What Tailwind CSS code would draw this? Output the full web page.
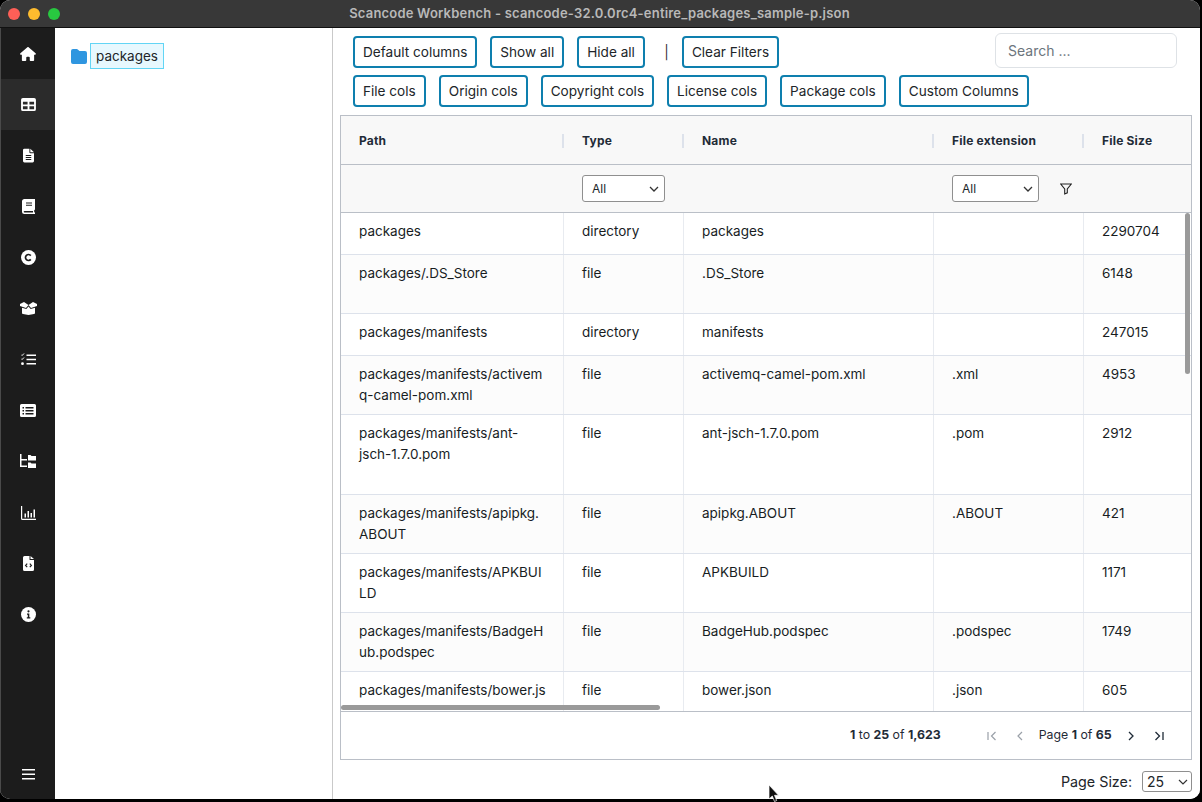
<!DOCTYPE html>
<html lang="en">
<head>
<meta charset="UTF-8">
<title>Scancode Workbench</title>
<script src="https://cdn.jsdelivr.net/npm/@tailwindcss/browser@4"></script>
</head>
<body class="bg-black">
<div class="relative w-[1202px] h-[802px] overflow-hidden bg-black [font-family:Inter,sans-serif] text-[#212529]">
  <div class="w-[1200px] h-[799px] rounded-[10px] overflow-hidden flex flex-col bg-white">

    <!-- title bar -->
    <div class="relative h-[28px] shrink-0 bg-[#383838] border-b border-[#111] flex items-center justify-center">
      <div class="absolute left-[8px] top-[8px] flex gap-[8px]">
        <span class="w-[12px] h-[12px] rounded-full bg-[#fe5f57]"></span>
        <span class="w-[12px] h-[12px] rounded-full bg-[#febc2e]"></span>
        <span class="w-[12px] h-[12px] rounded-full bg-[#28c840]"></span>
      </div>
      <span class="text-[13px] font-semibold text-[#b9b9b9] tracking-[0.2px] ml-[-1px]">Scancode Workbench - scancode-32.0.0rc4-entire_packages_sample-p.json</span>
    </div>

    <div class="flex flex-1 min-h-0">
      <!-- sidebar -->
      <div class="w-[55px] shrink-0 bg-[#1c1c1c] border-l border-[#4a4a4a] flex flex-col text-white">
        <div class="h-[51px] flex items-center justify-center">
          <svg class="w-[16px] h-[14px]" viewBox="0 0 576 512" fill="currentColor"><path d="M575.8 255.5c0 18-15 32.1-32 32.1h-32l.7 160.2c0 2.7-.2 5.4-.5 8.1V472c0 22.1-17.9 40-40 40H456c-1.1 0-2.2 0-3.3-.1c-1.4 .1-2.8 .1-4.2 .1H416 392c-22.1 0-40-17.9-40-40V448 384c0-17.7-14.3-32-32-32H256c-17.7 0-32 14.3-32 32v64 24c0 22.1-17.9 40-40 40H160 128.1c-1.5 0-3-.1-4.5-.2c-1.2 .1-2.4 .2-3.6 .2H104c-22.1 0-40-17.9-40-40V360c0-.9 0-1.9 .1-2.8V287.6H32c-18 0-32-14-32-32.1c0-9 3-17 10-24L266.4 8c7-7 15-8 22-8s15 2 21 7L564.8 231.5c8 7 12 15 11 24z"/></svg>
        </div>
        <div class="h-[51px] flex items-center justify-center bg-[#2b2b2b]">
          <svg class="w-[15px] h-[13px]" viewBox="0 0 16 14" fill="currentColor"><path fill-rule="evenodd" d="M2 0h12a2 2 0 0 1 2 2v10a2 2 0 0 1-2 2H2a2 2 0 0 1-2-2V2a2 2 0 0 1 2-2zM2 4v3h5V4zm7 0v3h5V4zM2 9v3h5V9zm7 0v3h5V9z"/></svg>
        </div>
        <div class="h-[51px] flex items-center justify-center">
          <svg class="w-[11px] h-[15px]" viewBox="0 0 12 15" fill="currentColor"><path fill-rule="evenodd" d="M1.500 0H7v4a1 1 0 0 0 1 1h4v8.500a1.500 1.500 0 0 1-1.500 1.500h-9A1.500 1.500 0 0 1 0 13.500v-12A1.500 1.500 0 0 1 1.500 0zM8 0l4 4H8zM3 7v1h6V7zm0 2.200v1h6v-1zm0 2.200v1h6v-1z"/></svg>
        </div>
        <div class="h-[51px] flex items-center justify-center">
          <svg class="w-[13px] h-[15px]" viewBox="0 0 13 15" fill="currentColor"><path fill-rule="evenodd" d="M2.500 0H13v10.500l-.8.700v1.800l.8.700V15H2.500A2.500 2.500 0 0 1 0 12.500v-10A2.500 2.500 0 0 1 2.500 0zM4 3.500v1h6v-1zm0 2.200v1h6v-1zM2.500 12a.8.800 0 0 0 0 1.600H11V12z"/></svg>
        </div>
        <div class="h-[51px] flex items-center justify-center">
          <svg class="w-[15px] h-[15px]" viewBox="0 0 15 15"><circle cx="7.500" cy="7.500" r="7.500" fill="currentColor"/><path d="M9.800 5.600a3 3 0 1 0 0 3.800" fill="none" stroke="#1c1c1c" stroke-width="1.700"/></svg>
        </div>
        <div class="h-[51px] flex items-center justify-center">
          <svg class="w-[17px] h-[13px]" viewBox="0 0 17 13" fill="currentColor"><path d="M0 2 4 0l4.500 3L6 6 0 4zM17 2l-4-2-4.500 3L11 6l6-2zM2 5.700l4.300 1.300 2.200-2.500 2.200 2.500L15 5.700V11a1 1 0 0 1-1 1l-5.500 1L3 12a1 1 0 0 1-1-1z"/></svg>
        </div>
        <div class="h-[51px] flex items-center justify-center">
          <svg class="w-[15px] h-[13px]" viewBox="0 0 15 13" fill="currentColor"><path d="M5.500 1.500H15v1.500H5.500zM5.500 5.700H15v1.500H5.500zM5.500 10H15v1.500H5.500z"/><path d="m.3 1.700.8.800L3 .5" fill="none" stroke="currentColor" stroke-width="1"/><path d="m.3 5.700.8.800L3 4.500" fill="none" stroke="currentColor" stroke-width="1"/><circle cx="1.500" cy="10.700" r="1.400"/></svg>
        </div>
        <div class="h-[51px] flex items-center justify-center">
          <svg class="w-[16px] h-[13px]" viewBox="0 0 16 13" fill="currentColor"><path fill-rule="evenodd" d="M1.500 0h13A1.500 1.500 0 0 1 16 1.500v10a1.500 1.500 0 0 1-1.500 1.500h-13A1.500 1.500 0 0 1 0 11.500v-10A1.500 1.500 0 0 1 1.500 0zM2.500 3v1.500H4V3zm3 0v1.500h8V3zm-3 3v1.500H4V6zm3 0v1.500h8V6zm-3 3v1.500H4V9zm3 0v1.500h8V9z"/></svg>
        </div>
        <div class="h-[51px] flex items-center justify-center">
          <svg class="w-[16px] h-[15px]" viewBox="0 0 16 15" fill="currentColor"><path d="M0 0h1.500v5H7v1.500H1.500v5H7V13H0z"/><path d="M8 1h2.500l1 1H16v4.500H8zM8 8.500h2.500l1 1H16V14H8z"/></svg>
        </div>
        <div class="h-[51px] flex items-center justify-center">
          <svg class="w-[15px] h-[14px]" viewBox="0 0 15 14" fill="currentColor"><path d="M0 0h1.200v12.800H15V14H1.500A1.500 1.500 0 0 1 0 12.500z"/><path d="M3.500 7.500h1.500v4H3.500zM6.500 5h1.500v6.500H6.500zM9.500 7h1.500v4.500H9.500zM12.500 3.500H14v8h-1.500z"/></svg>
        </div>
        <div class="h-[51px] flex items-center justify-center">
          <svg class="w-[11px] h-[15px]" viewBox="0 0 11 15" fill="currentColor"><path fill-rule="evenodd" d="M1.500 0H6.500v3.500a.5.500 0 0 0 .5.500H11v9.500a1.500 1.500 0 0 1-1.500 1.500h-8A1.500 1.500 0 0 1 0 13.500v-12A1.500 1.500 0 0 1 1.500 0zM7.500 0 11 3H7.500z"/><path d="M4.200 7.700 2.600 9.400l1.600 1.700M6.800 7.700l1.600 1.700-1.600 1.700" fill="none" stroke="#1c1c1c" stroke-width="1.200"/></svg>
        </div>
        <div class="h-[51px] flex items-center justify-center">
          <svg class="w-[15px] h-[15px]" viewBox="0 0 15 15"><circle cx="7.500" cy="7.500" r="7.500" fill="currentColor"/><circle cx="7.500" cy="4.300" r="1.100" fill="#1c1c1c"/><path d="M6 6.500h2.300v3.800h1v1.200H5.800v-1.200h1V7.700H6z" fill="#1c1c1c"/></svg>
        </div>
        <div class="mt-auto h-[50px] flex items-center justify-center">
          <svg class="w-[13px] h-[11px]" viewBox="0 0 13 11" fill="currentColor"><path d="M0 0h13v1.500H0zM0 4.500h13V6H0zM0 9h13v1.500H0z"/></svg>
        </div>
      </div>

      <!-- file tree -->
      <div class="w-[278px] shrink-0 bg-white border-r border-[#c9c9c9] pl-[16px] pt-[15px]">
        <div class="flex items-center gap-[3px]">
          <svg class="w-[16px] h-[15px]" viewBox="0 0 16 15" fill="#2f96e0"><path d="M2 0h3.800a1.500 1.500 0 0 1 1 .4L8.500 2H14a2 2 0 0 1 2 2v9a2 2 0 0 1-2 2H2a2 2 0 0 1-2-2V2a2 2 0 0 1 2-2z"/></svg>
          <span class="h-[26px] w-[74px] pt-[1px] flex items-center justify-center border border-[#62d5f5] bg-[#e7f8fe] text-[13.500px] leading-none">packages</span>
        </div>
      </div>

      <!-- main panel -->
      <div class="flex-1 min-w-0 flex flex-col pt-[8px] bg-white">
        <div class="pl-[20px] pr-[23px] text-[13.600px] text-[#212529]">
          <div class="flex items-start gap-[13px]">
            <button class="h-[32px] px-[8px] border-2 border-[#0e7fae] rounded-[4px] whitespace-nowrap">Default columns</button>
            <button class="h-[32px] px-[8px] border-2 border-[#0e7fae] rounded-[4px] whitespace-nowrap">Show all</button>
            <button class="h-[32px] px-[8px] border-2 border-[#0e7fae] rounded-[4px] whitespace-nowrap">Hide all</button>
            <span class="h-[32px] w-[11px] flex items-center justify-end text-[#333]">|</span>
            <button class="h-[32px] px-[8px] border-2 border-[#0e7fae] rounded-[4px] whitespace-nowrap">Clear Filters</button>
            <div class="ml-auto -mt-[3px] w-[182px] h-[35px] border border-[#dee2e6] rounded-[6px] pl-[12px] flex items-center text-[14px] text-[#6c757d]">Search ...</div>
          </div>
          <div class="flex gap-[13px] mt-[7px]">
            <button class="h-[32px] px-[8px] border-2 border-[#0e7fae] rounded-[4px] whitespace-nowrap">File cols</button>
            <button class="h-[32px] px-[8px] border-2 border-[#0e7fae] rounded-[4px] whitespace-nowrap">Origin cols</button>
            <button class="h-[32px] px-[8px] border-2 border-[#0e7fae] rounded-[4px] whitespace-nowrap">Copyright cols</button>
            <button class="h-[32px] px-[8px] border-2 border-[#0e7fae] rounded-[4px] whitespace-nowrap">License cols</button>
            <button class="h-[32px] px-[8px] border-2 border-[#0e7fae] rounded-[4px] whitespace-nowrap">Package cols</button>
            <button class="h-[32px] px-[8px] border-2 border-[#0e7fae] rounded-[4px] whitespace-nowrap">Custom Columns</button>
          </div>
        </div>

        <!-- table -->
        <div class="ml-[7px] mr-[8px] mt-[8px] h-[645px] border border-[#babfc7] flex flex-col">
          <div class="h-[49px] shrink-0 pt-[1px] bg-[#f8f8f8] border-b border-[#babfc7] grid grid-cols-[223px_120px_250px_150px_107px] items-center text-[12px] font-bold text-[#1f2b37] tracking-[0.2px]">
            <div class="pl-[18px] h-[14px] leading-[14px] border-r-2 border-[#dde2eb]">Path</div>
            <div class="pl-[18px] h-[14px] leading-[14px] border-r-2 border-[#dde2eb]">Type</div>
            <div class="pl-[18px] h-[14px] leading-[14px] border-r-2 border-[#dde2eb]">Name</div>
            <div class="pl-[18px] h-[14px] leading-[14px] border-r-2 border-[#dde2eb]">File extension</div>
            <div class="pl-[18px] h-[14px] leading-[14px]">File Size</div>
          </div>
          <div class="h-[48px] shrink-0 bg-[#f8f8f8] border-b border-[#babfc7] grid grid-cols-[223px_120px_250px_150px_107px] items-center text-[12px]">
            <div></div>
            <div class="pl-[18px]">
              <div class="w-[83px] h-[27px] bg-white border border-[#8f8f8f] rounded-[3px] flex items-center justify-between pl-[9px] pr-[5px]">All
                <svg class="w-[10px] h-[6px]" viewBox="0 0 10 6" fill="none" stroke="#333" stroke-width="1.300"><path d="m1 1 4 4 4-4"/></svg>
              </div>
            </div>
            <div></div>
            <div class="pl-[18px] flex items-center">
              <div class="w-[87px] h-[27px] bg-white border border-[#8f8f8f] rounded-[3px] flex items-center justify-between pl-[9px] pr-[5px]">All
                <svg class="w-[10px] h-[6px]" viewBox="0 0 10 6" fill="none" stroke="#333" stroke-width="1.300"><path d="m1 1 4 4 4-4"/></svg>
              </div>
              <svg class="ml-[21px] w-[12px] h-[12px]" viewBox="0 0 12 12" fill="none" stroke="#222" stroke-width="1.100"><path d="M.7 1h10.600L7.300 6v3.800L4.700 11V6z"/></svg>
            </div>
            <div></div>
          </div>

          <!-- rows -->
          <div class="relative flex-1 min-h-0 overflow-hidden text-[13.500px] leading-[21px] text-[#181d1f]">
            <div class="h-[42px] grid grid-cols-[223px_120px_250px_150px_107px] border-b border-[#dde2eb]">
              <div class="pl-[18px] pt-[8px] border-r border-[#e8ebf0]">packages</div><div class="pl-[18px] pt-[8px] border-r border-[#e8ebf0]">directory</div><div class="pl-[18px] pt-[8px] border-r border-[#e8ebf0]">packages</div><div class="pl-[18px] pt-[8px] border-r border-[#e8ebf0]"></div><div class="pl-[18px] pt-[8px]">2290704</div>
            </div>
            <div class="h-[59px] bg-[#fcfcfc] grid grid-cols-[223px_120px_250px_150px_107px] border-b border-[#dde2eb]">
              <div class="pl-[18px] pt-[8px] border-r border-[#e8ebf0]">packages/.DS_Store</div><div class="pl-[18px] pt-[8px] border-r border-[#e8ebf0]">file</div><div class="pl-[18px] pt-[8px] border-r border-[#e8ebf0]">.DS_Store</div><div class="pl-[18px] pt-[8px] border-r border-[#e8ebf0]"></div><div class="pl-[18px] pt-[8px]">6148</div>
            </div>
            <div class="h-[42px] grid grid-cols-[223px_120px_250px_150px_107px] border-b border-[#dde2eb]">
              <div class="pl-[18px] pt-[8px] border-r border-[#e8ebf0]">packages/manifests</div><div class="pl-[18px] pt-[8px] border-r border-[#e8ebf0]">directory</div><div class="pl-[18px] pt-[8px] border-r border-[#e8ebf0]">manifests</div><div class="pl-[18px] pt-[8px] border-r border-[#e8ebf0]"></div><div class="pl-[18px] pt-[8px]">247015</div>
            </div>
            <div class="h-[59px] bg-[#fcfcfc] grid grid-cols-[223px_120px_250px_150px_107px] border-b border-[#dde2eb]">
              <div class="pl-[18px] pt-[8px] border-r border-[#e8ebf0]">packages/manifests/activem<br>q-camel-pom.xml</div><div class="pl-[18px] pt-[8px] border-r border-[#e8ebf0]">file</div><div class="pl-[18px] pt-[8px] border-r border-[#e8ebf0]">activemq-camel-pom.xml</div><div class="pl-[18px] pt-[8px] border-r border-[#e8ebf0]">.xml</div><div class="pl-[18px] pt-[8px]">4953</div>
            </div>
            <div class="h-[80px] grid grid-cols-[223px_120px_250px_150px_107px] border-b border-[#dde2eb]">
              <div class="pl-[18px] pt-[8px] border-r border-[#e8ebf0]">packages/manifests/ant-<br>jsch-1.7.0.pom</div><div class="pl-[18px] pt-[8px] border-r border-[#e8ebf0]">file</div><div class="pl-[18px] pt-[8px] border-r border-[#e8ebf0]">ant-jsch-1.7.0.pom</div><div class="pl-[18px] pt-[8px] border-r border-[#e8ebf0]">.pom</div><div class="pl-[18px] pt-[8px]">2912</div>
            </div>
            <div class="h-[59px] bg-[#fcfcfc] grid grid-cols-[223px_120px_250px_150px_107px] border-b border-[#dde2eb]">
              <div class="pl-[18px] pt-[8px] border-r border-[#e8ebf0]">packages/manifests/apipkg.<br>ABOUT</div><div class="pl-[18px] pt-[8px] border-r border-[#e8ebf0]">file</div><div class="pl-[18px] pt-[8px] border-r border-[#e8ebf0]">apipkg.ABOUT</div><div class="pl-[18px] pt-[8px] border-r border-[#e8ebf0]">.ABOUT</div><div class="pl-[18px] pt-[8px]">421</div>
            </div>
            <div class="h-[59px] grid grid-cols-[223px_120px_250px_150px_107px] border-b border-[#dde2eb]">
              <div class="pl-[18px] pt-[8px] border-r border-[#e8ebf0]">packages/manifests/APKBUI<br>LD</div><div class="pl-[18px] pt-[8px] border-r border-[#e8ebf0]">file</div><div class="pl-[18px] pt-[8px] border-r border-[#e8ebf0]">APKBUILD</div><div class="pl-[18px] pt-[8px] border-r border-[#e8ebf0]"></div><div class="pl-[18px] pt-[8px]">1171</div>
            </div>
            <div class="h-[59px] bg-[#fcfcfc] grid grid-cols-[223px_120px_250px_150px_107px] border-b border-[#dde2eb]">
              <div class="pl-[18px] pt-[8px] border-r border-[#e8ebf0]">packages/manifests/BadgeH<br>ub.podspec</div><div class="pl-[18px] pt-[8px] border-r border-[#e8ebf0]">file</div><div class="pl-[18px] pt-[8px] border-r border-[#e8ebf0]">BadgeHub.podspec</div><div class="pl-[18px] pt-[8px] border-r border-[#e8ebf0]">.podspec</div><div class="pl-[18px] pt-[8px]">1749</div>
            </div>
            <div class="h-[40px] grid grid-cols-[223px_120px_250px_150px_107px]">
              <div class="pl-[18px] pt-[8px] border-r border-[#e8ebf0] whitespace-nowrap overflow-hidden">packages/manifests/bower.js</div><div class="pl-[18px] pt-[8px] border-r border-[#e8ebf0]">file</div><div class="pl-[18px] pt-[8px] border-r border-[#e8ebf0]">bower.json</div><div class="pl-[18px] pt-[8px] border-r border-[#e8ebf0]">.json</div><div class="pl-[18px] pt-[8px]">605</div>
            </div>
            <!-- overlay scrollbars -->
            <div class="absolute right-[1px] top-0 w-[5px] h-[161px] rounded-full bg-[#9a9a9a]"></div>
            <div class="absolute left-0 bottom-[1px] w-[319px] h-[5px] rounded-full bg-[#9a9a9a]"></div>
          </div>

          <!-- pagination -->
          <div class="h-[48px] shrink-0 border-t border-[#babfc7] flex items-center text-[12.300px] text-[#1f2b37]">
            <span class="ml-[509px]"><b class="font-bold">1</b> to <b class="font-bold">25</b> of <b class="font-bold">1,623</b></span>
            <svg class="ml-[45px] w-[12px] h-[12px]" viewBox="0 0 12 12" fill="none" stroke="#9aa0a8" stroke-width="1.200"><path d="M2 2v8M9.500 2 5.500 6l4 4"/></svg>
            <svg class="ml-[16px] w-[12px] h-[12px]" viewBox="0 0 12 12" fill="none" stroke="#9aa0a8" stroke-width="1.200"><path d="M8 2 4 6l4 4"/></svg>
            <span class="ml-[13px]">Page <b class="font-bold">1</b> of <b class="font-bold">65</b></span>
            <svg class="ml-[13px] w-[12px] h-[12px]" viewBox="0 0 12 12" fill="none" stroke="#1f2b37" stroke-width="1.300"><path d="m4 2 4 4-4 4"/></svg>
            <svg class="ml-[16px] w-[12px] h-[12px]" viewBox="0 0 12 12" fill="none" stroke="#1f2b37" stroke-width="1.300"><path d="m2.500 2 4 4-4 4M10 2v8"/></svg>
          </div>
        </div>

        <div class="mt-[11px] pr-[8px] flex items-center justify-end text-[14.300px]">
          <span>Page Size:</span>
          <div class="ml-[10px] w-[50px] h-[21px] border border-[#8f8f8f] rounded-[3px] flex items-center justify-between pl-[4px] pr-[3px] text-[14px]">25
            <svg class="w-[10px] h-[6px]" viewBox="0 0 10 6" fill="none" stroke="#333" stroke-width="1.200"><path d="m1 1 4 4 4-4"/></svg>
          </div>
        </div>
      </div>
    </div>
  </div>

  <!-- mouse cursor -->
  <svg class="absolute left-[768px] top-[785px] w-[11px] h-[17px]" viewBox="0 0 11 17"><path d="M1 0v14l3.300-3 2.200 5.500 2.200-.9-2.200-5.300H10.500z" fill="#111" stroke="#fff" stroke-width=".7"/></svg>
</div>
</body>
</html>
